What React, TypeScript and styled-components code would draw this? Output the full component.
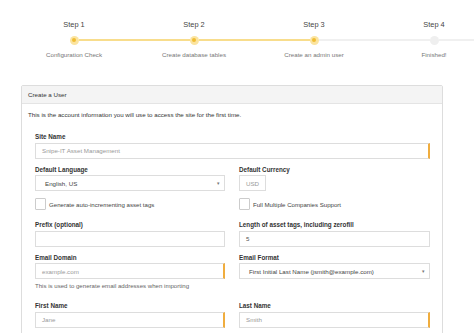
import styled, { createGlobalStyle } from "styled-components";

const GlobalStyle = createGlobalStyle`
  html, body {
    margin: 0;
    padding: 0;
    background: #fff;
    overflow: hidden;
    font-family: "Liberation Sans", Arial, sans-serif;
    color: #333;
  }
`;

const Page = styled.div`
  width: 474px;
  height: 333px;
  overflow: hidden;
`;

const Stepper = styled.div`
  display: grid;
  grid-template-columns: repeat(4, 120px);
  margin-left: 14px;
  padding-top: 20px;
  width: 480px;
`;

const Step = styled.div`
  display: flex;
  flex-direction: column;
  align-items: center;
`;

const StepTitle = styled.div`
  font-size: 7.4px;
  color: #444;
  line-height: 10px;
`;

const Track = styled.div`
  display: flex;
  align-items: center;
  width: 100%;
  height: 10px;
  margin-top: 5px;
`;

const Segment = styled.div<{ $color: string }>`
  flex: 1;
  height: 2.5px;
  background: ${(p) => p.$color};
`;

const Dot = styled.div<{ $done: boolean }>`
  width: 9px;
  height: 9px;
  border-radius: 50%;
  background: ${(p) => (p.$done ? "#fbe4a0" : "#efefef")};
  display: flex;
  align-items: center;
  justify-content: center;
  &::after {
    content: "";
    width: 4.5px;
    height: 4.5px;
    border-radius: 50%;
    background: ${(p) => (p.$done ? "#f0bd33" : "#efefef")};
  }
`;

const StepCaption = styled.div`
  font-size: 6.2px;
  color: #777;
  margin-top: 6px;
  white-space: nowrap;
`;

const Card = styled.div`
  margin: 27px 0 0 21px;
  width: 420px;
  border: 1px solid #ddd;
  border-radius: 2px;
`;

const CardHeader = styled.div`
  background: #f4f4f4;
  border-bottom: 1px solid #e4e4e4;
  height: 17px;
  padding-left: 6px;
  display: flex;
  align-items: center;
  font-size: 6.2px;
  color: #333;
`;

const CardBody = styled.div`
  padding: 7px 13px 0 6px;
`;

const Intro = styled.p`
  margin: 0 0 14px;
  font-size: 6.2px;
  line-height: 8px;
  color: #333;
`;

const Grid = styled.div`
  display: grid;
  grid-template-columns: 190px 191px;
  column-gap: 14px;
  padding-left: 7px;
`;

const Field = styled.div<{ $span?: boolean; $gap?: number }>`
  grid-column: ${(p) => (p.$span ? "1 / span 2" : "auto")};
  margin-bottom: ${(p) => p.$gap ?? 7}px;
`;

const Label = styled.div`
  font-size: 6.3px;
  font-weight: bold;
  color: #333;
  line-height: 7px;
  margin-bottom: 2.5px;
`;

const Input = styled.div<{ $required?: boolean; $width?: string; $filled?: boolean }>`
  box-sizing: border-box;
  height: 16px;
  width: ${(p) => p.$width ?? "100%"};
  border: 1px solid #ddd;
  border-right: ${(p) => (p.$required ? "2.5px solid #f0ad3e" : "1px solid #ddd")};
  display: flex;
  align-items: center;
  padding-left: 6px;
  font-size: 6.2px;
  color: ${(p) => (p.$filled ? "#555" : "#999")};
  background: #fff;
`;

const Select = styled(Input)`
  justify-content: space-between;
  padding: 0 4px 0 9px;
  color: #444;
  &::after {
    content: "▾";
    font-size: 5px;
    color: #777;
  }
`;

const CheckRow = styled.label`
  display: flex;
  align-items: center;
  gap: 3px;
  font-size: 6.1px;
  color: #444;
  margin: 0 0 11px;
`;

const Box = styled.span`
  box-sizing: border-box;
  width: 11px;
  height: 12px;
  border: 1px solid #ccc;
  border-radius: 1px;
  background: #fff;
`;

const Help = styled.div`
  font-size: 6.1px;
  line-height: 8px;
  color: #666;
  margin-top: 3px;
`;

const steps = [
  { title: "Step 1", caption: "Configuration Check", done: true },
  { title: "Step 2", caption: "Create database tables", done: true },
  { title: "Step 3", caption: "Create an admin user", done: true },
  { title: "Step 4", caption: "Finished!", done: false },
];

export default function App() {
  return (
    <Page>
      <GlobalStyle />
      <Stepper>
        {steps.map((s, i) => (
          <Step key={s.title}>
            <StepTitle>{s.title}</StepTitle>
            <Track>
              <Segment $color={i === 0 ? "transparent" : s.done ? "#f8dd8c" : "#f0f0f0"} />
              <Dot $done={s.done} />
              <Segment $color={i < 2 ? "#f8dd8c" : "#f0f0f0"} />
            </Track>
            <StepCaption>{s.caption}</StepCaption>
          </Step>
        ))}
      </Stepper>

      <Card>
        <CardHeader>Create a User</CardHeader>
        <CardBody>
          <Intro>This is the account information you will use to access the site for the first time.</Intro>
          <Grid>
            <Field $span>
              <Label>Site Name</Label>
              <Input $required>Snipe-IT Asset Management</Input>
            </Field>

            <Field>
              <Label>Default Language</Label>
              <Select>English, US</Select>
            </Field>
            <Field>
              <Label>Default Currency</Label>
              <Input $width="27px">USD</Input>
            </Field>

            <CheckRow>
              <Box />
              Generate auto-incrementing asset tags
            </CheckRow>
            <CheckRow>
              <Box />
              Full Multiple Companies Support
            </CheckRow>

            <Field>
              <Label>Prefix (optional)</Label>
              <Input />
            </Field>
            <Field>
              <Label>Length of asset tags, including zerofill</Label>
              <Input $filled>5</Input>
            </Field>

            <Field $gap={12}>
              <Label>Email Domain</Label>
              <Input $required>example.com</Input>
              <Help>This is used to generate email addresses when importing</Help>
            </Field>
            <Field $gap={12}>
              <Label>Email Format</Label>
              <Select>First Initial Last Name (jsmith@example.com)</Select>
            </Field>

            <Field>
              <Label>First Name</Label>
              <Input $required>Jane</Input>
            </Field>
            <Field>
              <Label>Last Name</Label>
              <Input $required>Smith</Input>
            </Field>
          </Grid>
        </CardBody>
      </Card>
    </Page>
  );
}
